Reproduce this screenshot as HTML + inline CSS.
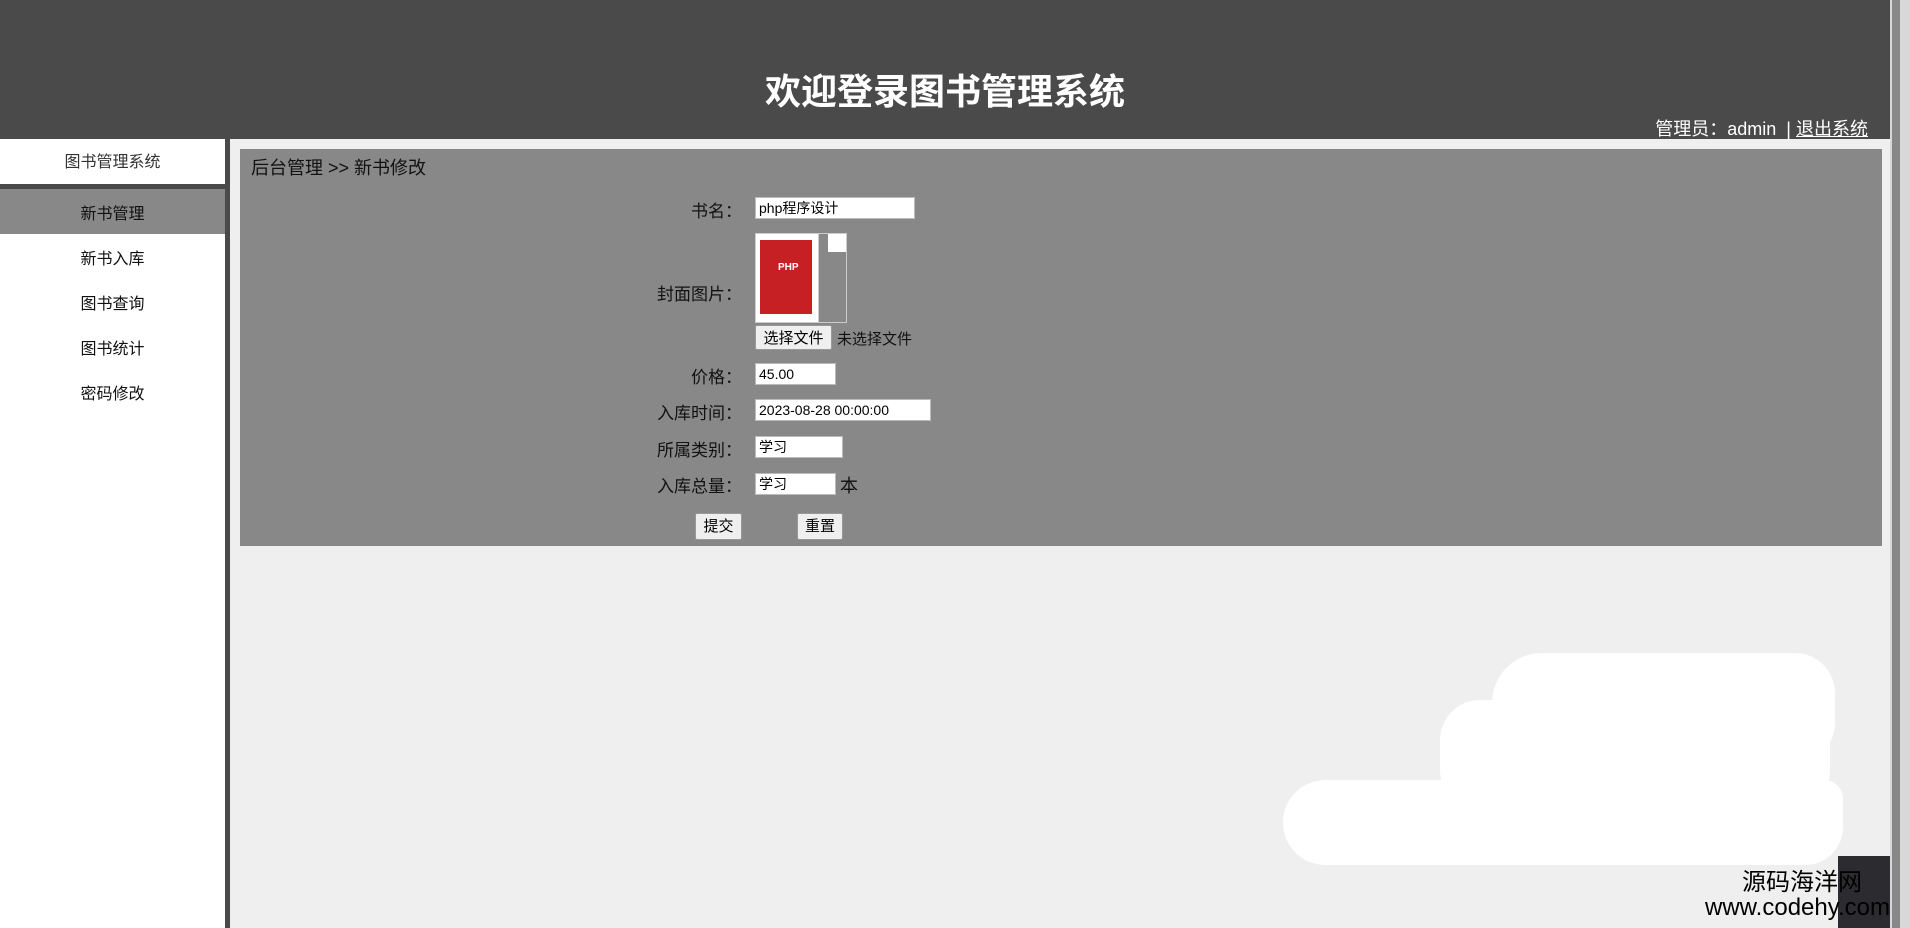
<!DOCTYPE html>
<html><head><meta charset="utf-8"><style>
*{margin:0;padding:0;box-sizing:border-box}
body{width:1910px;height:928px;overflow:hidden;background:#efefef;font-family:"Liberation Sans","Noto Sans CJK SC",sans-serif;position:relative}
.a{position:absolute}
.hd{left:0;top:0;width:1890px;height:139px;background:#4a4a4a}
.t{left:0;width:1890px;top:63px;text-align:center;color:#fff;font-size:36px;font-weight:bold}
.adm{right:42px;top:115px;color:#fff;font-size:18px}
.side{left:0;top:139px;width:225px;height:789px;background:#fff}
.bar{left:225px;top:139px;width:5px;height:789px;background:#4a4a4a}
.it{left:0;width:225px;height:45px;line-height:45px;text-align:center;font-size:16px;color:#111}
.panel{left:240px;top:149px;width:1642px;height:397px;background:#888}
.lb{width:300px;text-align:right;font-size:17px;color:#111}
.in{background:#fff;border:1px solid #bbb;font-size:14px;padding-left:3px;color:#000;height:22px;line-height:20px}
.btn{background:#efefef;border:1px solid #999;font-size:15px;text-align:center;line-height:25px;border-radius:2px}
</style></head><body>
<div class="a hd"></div>
<div class="a t">欢迎登录图书管理系统</div>
<div class="a adm">管理员：admin &nbsp;| <u>退出系统</u></div>
<div class="a side"></div>
<div class="a" style="left:0;top:184px;width:225px;height:5px;background:#4a4a4a"></div>
<div class="a it" style="top:140px;color:#333">图书管理系统</div>
<div class="a it" style="top:189px;background:#888;line-height:51px">新书管理</div>
<div class="a it" style="top:237px">新书入库</div>
<div class="a it" style="top:282px">图书查询</div>
<div class="a it" style="top:327px">图书统计</div>
<div class="a it" style="top:372px">密码修改</div>
<div class="a bar"></div>
<div class="a panel"></div>
<div class="a" style="left:251px;top:154px;font-size:18px;color:#111">后台管理 &gt;&gt; 新书修改</div>
<div class="a lb" style="left:442px;top:197px">书名：</div>
<div class="a in" style="left:755px;top:197px;width:160px">php程序设计</div>
<div class="a lb" style="left:442px;top:280px">封面图片：</div>
<div class="a" style="left:755px;top:233px;width:92px;height:90px;background:#fff;border:1px solid #ccc"></div>
<div class="a" style="left:818px;top:233px;width:29px;height:90px;background:#888;border:1px solid #ccc"></div>
<div class="a" style="left:828px;top:234px;width:18px;height:18px;background:#fff"></div>
<div class="a" style="left:760px;top:240px;width:52px;height:74px;background:#c62025"></div>
<div class="a" style="left:778px;top:262px;color:#fff;font-size:10px;font-weight:bold">PHP</div>
<div class="a btn" style="left:755px;top:325px;width:77px;height:25px">选择文件</div>
<div class="a" style="left:837px;top:328px;font-size:15px;color:#111">未选择文件</div>
<div class="a lb" style="left:442px;top:363px">价格：</div>
<div class="a in" style="left:755px;top:363px;width:81px">45.00</div>
<div class="a lb" style="left:442px;top:399px">入库时间：</div>
<div class="a in" style="left:755px;top:399px;width:176px">2023-08-28 00:00:00</div>
<div class="a lb" style="left:442px;top:436px">所属类别：</div>
<div class="a in" style="left:755px;top:436px;width:88px">学习</div>
<div class="a lb" style="left:442px;top:472px">入库总量：</div>
<div class="a in" style="left:755px;top:473px;width:81px">学习</div>
<div class="a" style="left:840px;top:472px;font-size:18px;color:#111">本</div>
<div class="a btn" style="left:695px;top:513px;width:47px;height:27px">提交</div>
<div class="a btn" style="left:797px;top:513px;width:46px;height:27px">重置</div>
<div class="a" style="left:1492px;top:653px;width:343px;height:110px;background:#fff;border-radius:50px 40px 40px 30px"></div>
<div class="a" style="left:1440px;top:700px;width:390px;height:110px;background:#fff;border-radius:40px"></div>
<div class="a" style="left:1283px;top:780px;width:560px;height:85px;background:#fff;border-radius:45px 20px 40px 45px"></div>
<div class="a" style="left:1890px;top:0;width:20px;height:928px;background:#d8d8d8"></div>
<div class="a" style="left:1892px;top:0;width:8px;height:928px;background:#888"></div>
<div class="a" style="left:1838px;top:856px;width:52px;height:72px;background:#2b2b30"></div>
<div class="a" style="left:1742px;top:870px;font-size:24px;color:#000;line-height:26px">源码海洋网</div>
<div class="a" style="left:1705px;top:895px;font-size:24px;color:#000;line-height:26px">www.codehy.com</div>
</body></html>
